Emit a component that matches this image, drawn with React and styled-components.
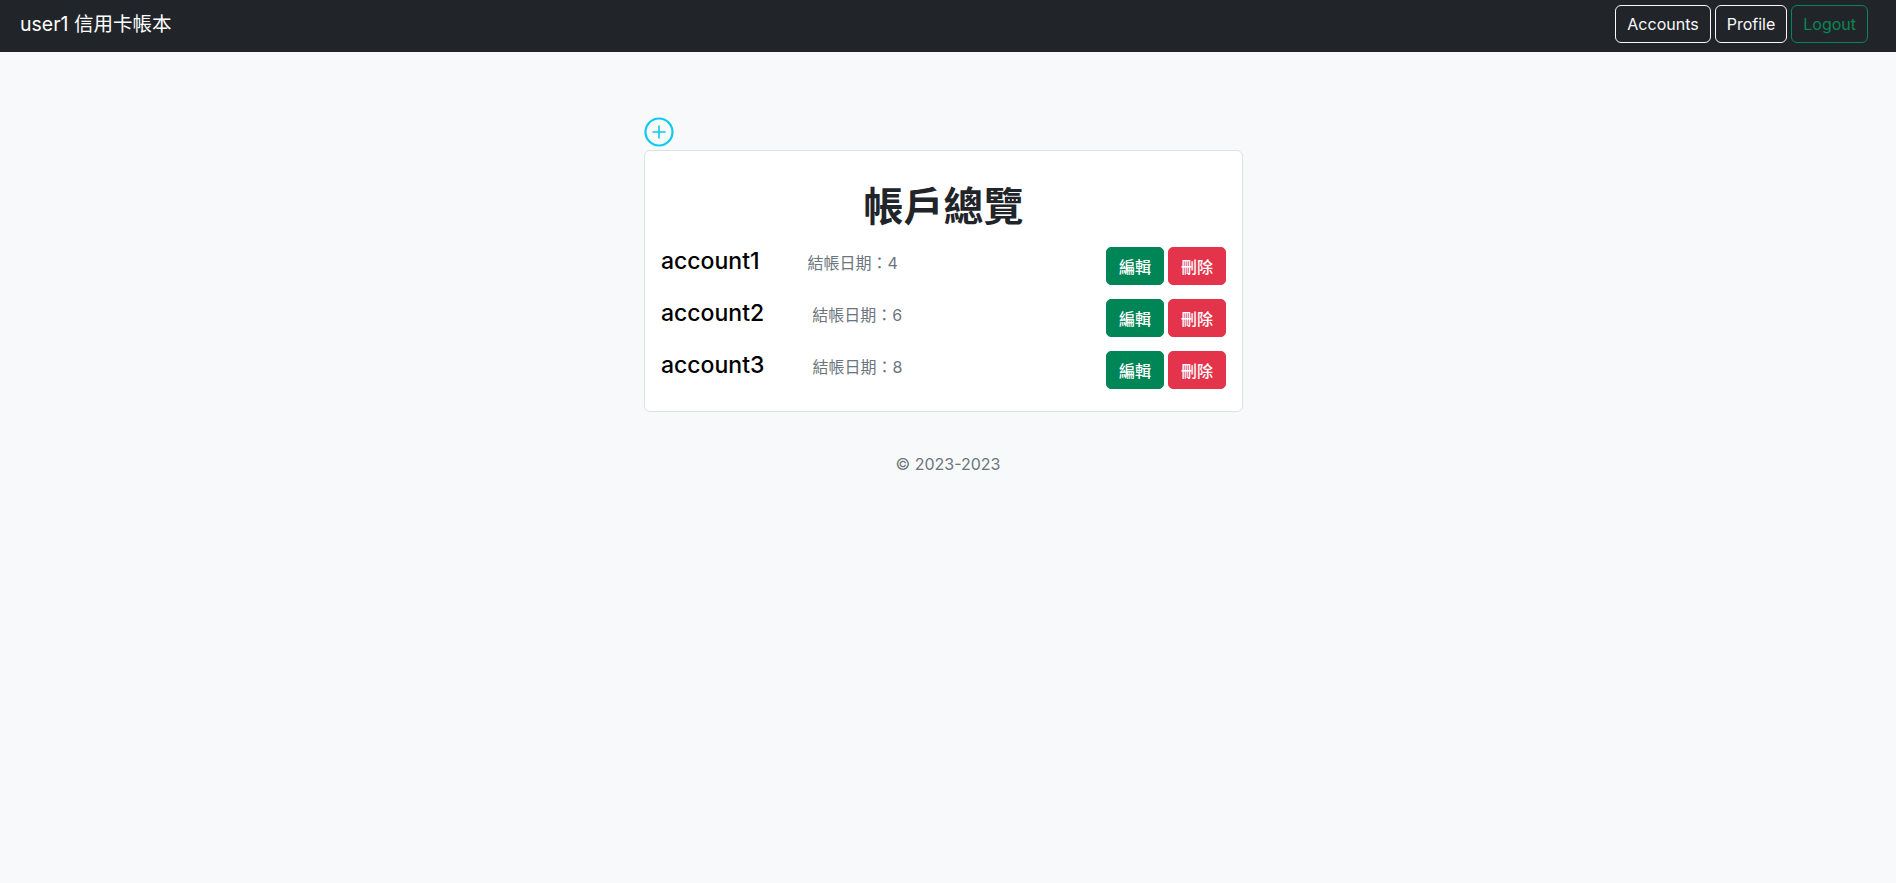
import React from "react";
import styled, { createGlobalStyle } from "styled-components";

const accounts = [
  { name: "account1", day: 4 },
  { name: "account2", day: 6 },
  { name: "account3", day: 8 },
];

const App = () => {
  return (
    <>
      <GlobalStyle />
      <Navbar>
        <Brand>user1 信用卡帳本</Brand>
        <NavButtons>
          <NavButton>Accounts</NavButton>
          <NavButton>Profile</NavButton>
          <NavButton variant="success">Logout</NavButton>
        </NavButtons>
      </Navbar>
      <Main>
        <Column>
          <AddButton aria-label="add">
            <svg width="30" height="30" viewBox="0 0 30 30">
              <circle cx="15" cy="15" r="13.5" fill="none" stroke="currentColor" strokeWidth="2.2" />
              <path d="M15 9v12M9 15h12" stroke="currentColor" strokeWidth="1.6" strokeLinecap="round" />
            </svg>
          </AddButton>
          <Card>
            <Title>帳戶總覽</Title>
            <List>
              {accounts.map((a) => (
                <Row key={a.name}>
                  <Info>
                    <Name>{a.name}</Name>
                    <DateText>結帳日期：{a.day}</DateText>
                  </Info>
                  <Actions>
                    <ActionButton variant="success">編輯</ActionButton>
                    <ActionButton variant="danger">刪除</ActionButton>
                  </Actions>
                </Row>
              ))}
            </List>
          </Card>
        </Column>
      </Main>
      <Footer>© 2023-2023</Footer>
    </>
  );
};

export default App;

const GlobalStyle = createGlobalStyle`
  body {
    margin: 0;
    background: #f8f9fa;
    font-family: Inter, "Noto Sans CJK TC", sans-serif;
    color: #212529;
    font-size: 16px;
    line-height: 1.5;
  }
  * { box-sizing: border-box; }
`;

const Navbar = styled.nav`
  height: 52px;
  background: #212529;
  display: flex;
  align-items: center;
  justify-content: space-between;
  padding: 5px 28px 9px 20px;
`;

const Brand = styled.div`
  color: #fff;
  font-size: 19.5px;
  line-height: 30px;
`;

const NavButtons = styled.div`
  display: flex;
  gap: 4px;
`;

const NavButton = styled.button`
  height: 38px;
  padding: 0 11px;
  font-family: inherit;
  font-size: 16px;
  background: transparent;
  border-radius: 6px;
  border: 1px solid ${(p) => (p.variant === "success" ? "#0a8556" : "#f8f9fa")};
  color: ${(p) => (p.variant === "success" ? "#0a8556" : "#f8f9fa")};
`;

const Main = styled.main`
  max-width: 1320px;
  margin: 0 auto;
  padding: 65px 0 0 356px;
`;

const Column = styled.div`
  width: 599px;
  display: flex;
  flex-direction: column;
  align-items: flex-start;
`;

const AddButton = styled.div`
  width: 30px;
  height: 30px;
  color: #0dcaf0;
  margin-bottom: 3px;
  display: flex;
  svg { display: block; }
`;

const Card = styled.div`
  width: 100%;
  background: #fff;
  border: 1px solid #dee2e6;
  border-radius: 6px;
  padding: 32px 16px 22px 16px;
`;

const Title = styled.h1`
  margin: 0 0 16px;
  text-align: center;
  font-size: 40px;
  line-height: 48px;
  font-weight: 700;
  color: #212529;
`;

const List = styled.div`
  display: flex;
  flex-direction: column;
  gap: 14px;
`;

const Row = styled.div`
  display: flex;
  align-items: flex-start;
  justify-content: space-between;
  height: 38px;
`;

const Info = styled.div`
  display: flex;
  align-items: baseline;
`;

const Name = styled.h4`
  margin: 0;
  font-size: 23px;
  line-height: 28px;
  font-weight: 500;
  color: #000;
`;

const DateText = styled.span`
  margin-left: 48px;
  font-size: 16px;
  color: #6c757d;
`;

const Actions = styled.div`
  display: flex;
  gap: 4px;
`;

const ActionButton = styled.button`
  height: 38px;
  padding: 0 12px;
  border: 1px solid ${(p) => (p.variant === "danger" ? "#e3344b" : "#008556")};
  border-radius: 5px;
  font-family: inherit;
  font-size: 16px;
  font-weight: 500;
  color: #fff;
  background: ${(p) => (p.variant === "danger" ? "#e3344b" : "#008556")};
`;

const Footer = styled.footer`
  margin-top: 40px;
  text-align: center;
  color: #6c757d;
  font-size: 16px;
  line-height: 24px;
`;
